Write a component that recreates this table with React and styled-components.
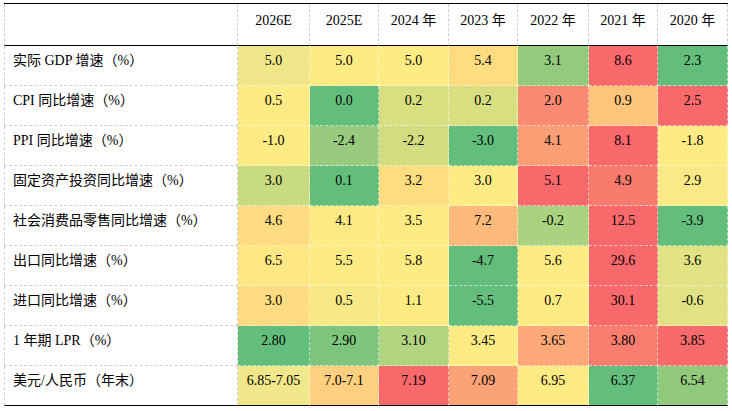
import React from "react";
import styled, { createGlobalStyle } from "styled-components";

const years = ["2026E", "2025E", "2024 年", "2023 年", "2022 年", "2021 年", "2020 年"];

// each cell: [value, background]
const rows = [
  {
    label: "实际 GDP 增速（%）",
    cells: [
      ["5.0", "#EFE68A"],
      ["5.0", "#FFEB84"],
      ["5.0", "#FFEB84"],
      ["5.4", "#FEDD81"],
      ["3.1", "#94CA7D"],
      ["8.6", "#F8696B"],
      ["2.3", "#63BE7B"],
    ],
  },
  {
    label: "CPI 同比增速（%）",
    cells: [
      ["0.5", "#FFEB84"],
      ["0.0", "#63BE7B"],
      ["0.2", "#D7DF81"],
      ["0.2", "#D7DF81"],
      ["2.0", "#FA8A72"],
      ["0.9", "#FDC47C"],
      ["2.5", "#F8696B"],
    ],
  },
  {
    label: "PPI 同比增速（%）",
    cells: [
      ["-1.0", "#FFEB84"],
      ["-2.4", "#98CB7D"],
      ["-2.2", "#D2DD81"],
      ["-3.0", "#63BE7B"],
      ["4.1", "#FB9D75"],
      ["8.1", "#F8696B"],
      ["-1.8", "#FFEB84"],
    ],
  },
  {
    label: "固定资产投资同比增速（%）",
    cells: [
      ["3.0", "#C9DB80"],
      ["0.1", "#63BE7B"],
      ["3.2", "#FEDD81"],
      ["3.0", "#FFEB84"],
      ["5.1", "#F8696B"],
      ["4.9", "#F97B6E"],
      ["2.9", "#FAE984"],
    ],
  },
  {
    label: "社会消费品零售同比增速（%）",
    cells: [
      ["4.6", "#FFDB81"],
      ["4.1", "#FFEA84"],
      ["3.5", "#FFEB84"],
      ["7.2", "#FDBA7B"],
      ["-0.2", "#AAD27F"],
      ["12.5", "#F8696B"],
      ["-3.9", "#63BE7B"],
    ],
  },
  {
    label: "出口同比增速（%）",
    cells: [
      ["6.5", "#FFE783"],
      ["5.5", "#FFEB84"],
      ["5.8", "#FFEB84"],
      ["-4.7", "#63BE7B"],
      ["5.6", "#FFEB84"],
      ["29.6", "#F8696B"],
      ["3.6", "#E0E283"],
    ],
  },
  {
    label: "进口同比增速（%）",
    cells: [
      ["3.0", "#FFDC81"],
      ["0.5", "#F6E884"],
      ["1.1", "#FFEB84"],
      ["-5.5", "#63BE7B"],
      ["0.7", "#FFEB84"],
      ["30.1", "#F8696B"],
      ["-0.6", "#E0E283"],
    ],
  },
  {
    label: "1 年期 LPR（%）",
    cells: [
      ["2.80", "#63BE7B"],
      ["2.90", "#7DC57C"],
      ["3.10", "#B0D47F"],
      ["3.45", "#FFEB84"],
      ["3.65", "#FCA878"],
      ["3.80", "#F97D6F"],
      ["3.85", "#F8696B"],
    ],
  },
  {
    label: "美元/人民币（年末）",
    cells: [
      ["6.85-7.05", "#F0E68A"],
      ["7.0-7.1", "#FFD07F"],
      ["7.19", "#F8696B"],
      ["7.09", "#FBA377"],
      ["6.95", "#FFEB84"],
      ["6.37", "#63BE7B"],
      ["6.54", "#91C97D"],
    ],
  },
];

function App() {
  return (
    <>
      <GlobalStyle />
      <Page>
        <Grid>
          <HeadCell first />
          {years.map((y) => (
            <HeadCell key={y}>{y}</HeadCell>
          ))}
          {rows.map((row, i) => {
            const last = i === rows.length - 1;
            return (
              <React.Fragment key={row.label}>
                <LabelCell last={last}>{row.label}</LabelCell>
                {row.cells.map(([value, bg], j) => (
                  <ValueCell key={j} bg={bg} last={last}>
                    {value}
                  </ValueCell>
                ))}
              </React.Fragment>
            );
          })}
        </Grid>
      </Page>
    </>
  );
}

// Styles
const GlobalStyle = createGlobalStyle`
  html, body {
    margin: 0;
    background: #fff;
  }
  body {
    font-family: "Liberation Serif", "Noto Sans CJK SC", serif;
    color: #000;
  }
`;

const Page = styled.div`
  padding: 3px 4px;
  width: 732px;
  box-sizing: border-box;
`;

const Grid = styled.div`
  display: grid;
  grid-template-columns: 234px 72px 69px 70px 69px 71px 69px 70px;
  grid-template-rows: 42px;
  grid-auto-rows: 40px;
  width: 724px;
  border-top: 1px solid #000;
  font-size: 14px;
  line-height: 16px;
`;

const Cell = styled.div`
  box-sizing: border-box;
  border-right: 1px dashed #cfcfcf;
  border-bottom: 1px dashed #cfcfcf;
  padding-top: 7px;
  white-space: nowrap;
`;

const HeadCell = styled(Cell)`
  text-align: center;
  padding-top: 9px;
  border-bottom: 1px solid #000;
  border-left: ${(p) => (p.first ? "1px dashed #cfcfcf" : "none")};
`;

const LabelCell = styled(Cell)`
  padding-left: 8px;
  border-left: 1px dashed #cfcfcf;
  border-bottom: ${(p) => (p.last ? "1px solid #000" : "1px dashed #cfcfcf")};
`;

const ValueCell = styled(Cell)`
  text-align: center;
  background: ${(p) => p.bg};
  border-right-color: rgba(255, 255, 255, 0.6);
  border-bottom: ${(p) =>
    p.last ? "1px solid #000" : "1px dashed rgba(255, 255, 255, 0.6)"};
`;

export default App;
